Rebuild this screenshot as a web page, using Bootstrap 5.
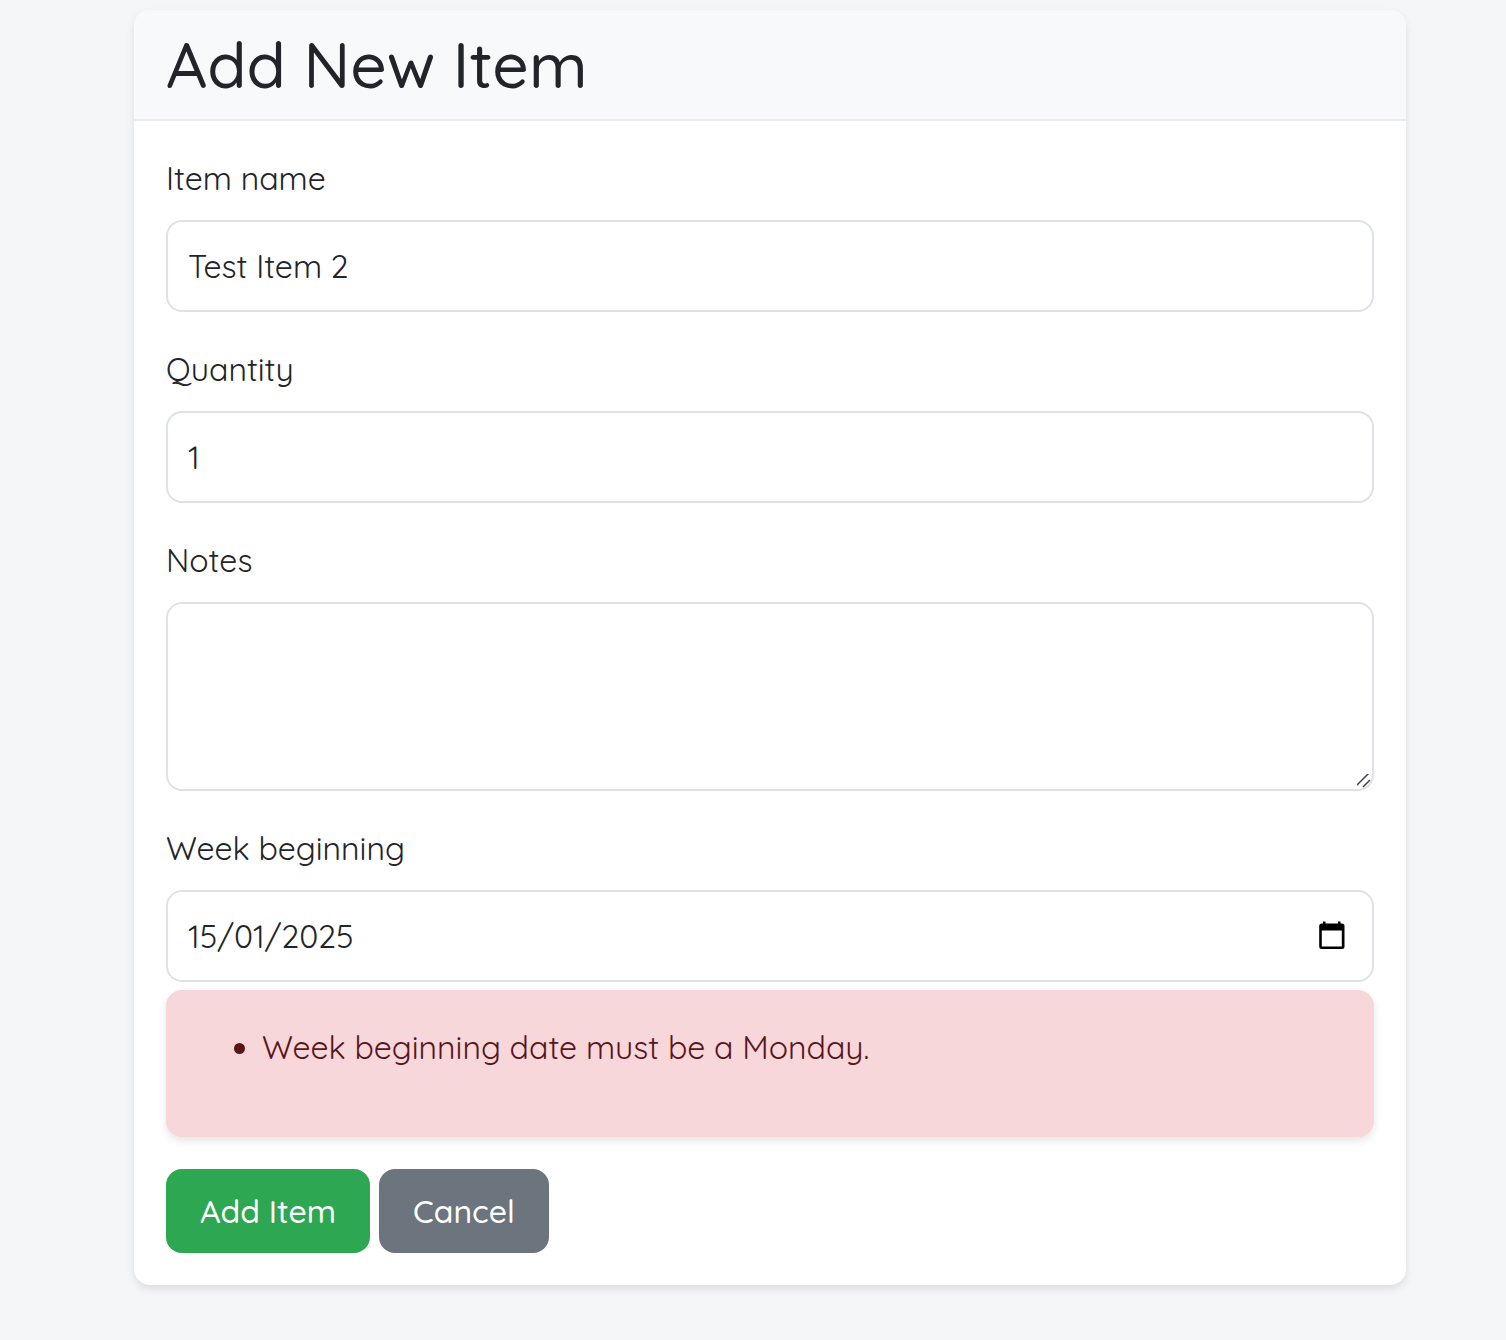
<!DOCTYPE html>
<html lang="en-GB">
<head>
<meta charset="utf-8">
<meta name="viewport" content="width=device-width, initial-scale=1">
<title>Add New Item</title>
<link rel="stylesheet" href="https://cdn.jsdelivr.net/npm/bootstrap@5.3.0/dist/css/bootstrap.min.css">
<style>
  body {
    font-family: Quicksand, Inter, "Liberation Sans", sans-serif;
    font-size: 32px;
    line-height: 51px;
    color: #212529;
    background: #f4f6f8;
  }
  .item-page { padding: 10px 100px 32px 134px; }
  .item-card {
    border: 0;
    border-radius: 16px;
    box-shadow: 0 4px 8px rgba(0, 0, 0, .1);
  }
  .item-card > .card-header {
    padding: 16px 32px;
    background: #f8f9fb;
    border-bottom: 2px solid #e9ebee;
    border-radius: 16px 16px 0 0;
  }
  .item-card h1 { font-size: 64px; line-height: 77px; font-weight: 500; }
  .item-card > .card-body { padding: 32px; }
  .item-field { margin-bottom: 32px; }
  .item-field .form-label { display: block; margin-bottom: 16px; }
  .item-field .form-control {
    height: 92px;
    padding: 18px 20px;
    font-size: 32px;
    line-height: 51px;
    border: 2px solid #dee2e6;
    border-radius: 16px;
  }
  .item-field textarea.form-control { height: 189px; }
  textarea::-webkit-resizer {
    background: url("data:image/svg+xml,%3Csvg xmlns='http://www.w3.org/2000/svg' width='17' height='17'%3E%3Cpath d='M0 15L15 0M8 15L15 8' stroke='%23444' stroke-width='1.500'/%3E%3C/svg%3E") no-repeat right bottom;
  }
  .date-toggle { right: 28px; width: 28px; height: 32px; line-height: 0; }
  .item-errors {
    margin: 8px 0 32px;
    padding: 32px;
    border: 0;
    border-radius: 16px;
    color: #58151c;
    background: #f8d7da;
    box-shadow: 0 4px 8px rgba(0, 0, 0, .1);
  }
  .item-errors ul { margin-bottom: 32px; padding-left: 64px; }
  .item-actions { gap: 9px; }
  .item-actions .btn {
    padding: 16px 32px;
    border: 2px solid transparent;
    border-radius: 16px;
    font-size: 32px;
    line-height: 48px;
    font-weight: 500;
  }
  .item-actions .btn-success { background: #2da751; }
  .item-actions .btn-secondary { background: #6c757d; }
</style>
</head>
<body>
<main class="item-page">
  <div class="card item-card">
    <div class="card-header"><h1 class="mb-0">Add New Item</h1></div>
    <form class="card-body">
      <div class="item-field">
        <label class="form-label" for="itemName">Item name</label>
        <input class="form-control" id="itemName" type="text" value="Test Item 2">
      </div>
      <div class="item-field">
        <label class="form-label" for="quantity">Quantity</label>
        <input class="form-control" id="quantity" type="number" value="1">
      </div>
      <div class="item-field">
        <label class="form-label" for="notes">Notes</label>
        <textarea class="form-control" id="notes"></textarea>
      </div>
      <div class="item-field mb-0">
        <label class="form-label" for="weekBeginning">Week beginning</label>
        <div class="position-relative">
          <input class="form-control" id="weekBeginning" type="text" inputmode="numeric" value="15/01/2025">
          <button class="date-toggle btn p-0 border-0 position-absolute top-50 translate-middle-y" type="button" aria-label="Choose date">
            <svg width="28" height="32" viewBox="0 0 28 32" aria-hidden="true"><path fill="#000" fill-rule="evenodd" d="M5 1.500h2.500v2h12.500v-2h2.500v2h1.500A2.500 2.500 0 0 1 26.500 6v20.500a2.500 2.500 0 0 1-2.500 2.500h-20A2.500 2.500 0 0 1 1.200 26.500V6A2.500 2.500 0 0 1 3.700 3.500H5zM3.800 10.500v16h20v-16z"/></svg>
          </button>
        </div>
      </div>
      <div class="alert item-errors" role="alert">
        <ul><li>Week beginning date must be a Monday.</li></ul>
      </div>
      <div class="item-actions d-flex flex-wrap">
        <button class="btn btn-success" type="submit">Add Item</button>
        <a class="btn btn-secondary" href="#">Cancel</a>
      </div>
    </form>
  </div>
</main>
<script src="https://cdn.jsdelivr.net/npm/bootstrap@5.3.0/dist/js/bootstrap.bundle.min.js"></script>
</body>
</html>
